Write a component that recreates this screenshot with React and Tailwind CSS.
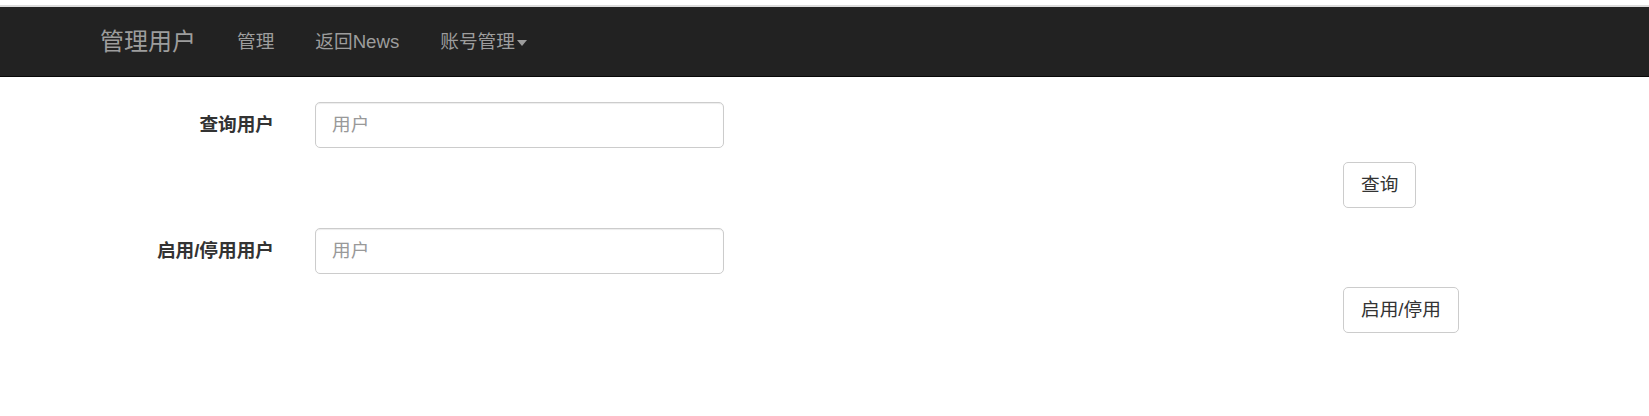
import React from 'react'

const font = { fontFamily: '"Liberation Sans", "Noto Sans CJK SC", sans-serif' }

function NavBar() {
  return (
    <nav className="mt-[5px] h-[72px] border-t-2 border-b border-t-[#dcdcdc] border-b-[#080808] bg-[#222222] flex items-center pl-[100px]">
      <a className="text-[24px] leading-[26px] text-[#9d9d9d] pr-[22px]">管理用户</a>
      <ul className="flex items-center text-[18.67px] leading-[26px] text-[#9d9d9d]">
        <li className="pl-[19px] pr-5">管理</li>
        <li className="pl-[21px] pr-5">返回News</li>
        <li className="pl-[21px] pr-5 flex items-center">
          账号管理
          <span className="ml-[2px] mt-[2px] w-0 h-0 border-t-[6px] border-t-[#9d9d9d] border-x-[5px] border-x-transparent" />
        </li>
      </ul>
    </nav>
  )
}

function FormRow({ label }) {
  return (
    <div className="flex items-center">
      <label className="w-[274px] text-right font-bold text-[18.67px] text-[#333333]">{label}</label>
      <input
        placeholder="用户"
        className="ml-[41px] w-[409px] h-[46px] border border-[#cccccc] rounded-[5px] px-4 text-[18.67px] text-[#555555] placeholder:text-[#999999] shadow-[inset_0_1px_1px_rgba(0,0,0,0.075)] outline-none"
        style={font}
      />
    </div>
  )
}

function ActionButton({ children }) {
  return (
    <div className="pl-[1343px]">
      <button
        className="h-[46px] px-[17px] border border-[#cccccc] rounded-[5px] bg-white text-[18.67px] text-[#333333]"
        style={font}
      >
        {children}
      </button>
    </div>
  )
}

export default function App() {
  return (
    <div className="min-h-screen bg-white" style={font}>
      <NavBar />

      <form className="flex flex-col pt-[25px]">
        <FormRow label="查询用户" />
        <div className="mt-[14px]">
          <ActionButton>查询</ActionButton>
        </div>
        <div className="mt-[20px]">
          <FormRow label="启用/停用用户" />
        </div>
        <div className="mt-[13px]">
          <ActionButton>启用/停用</ActionButton>
        </div>
      </form>
    </div>
  )
}
